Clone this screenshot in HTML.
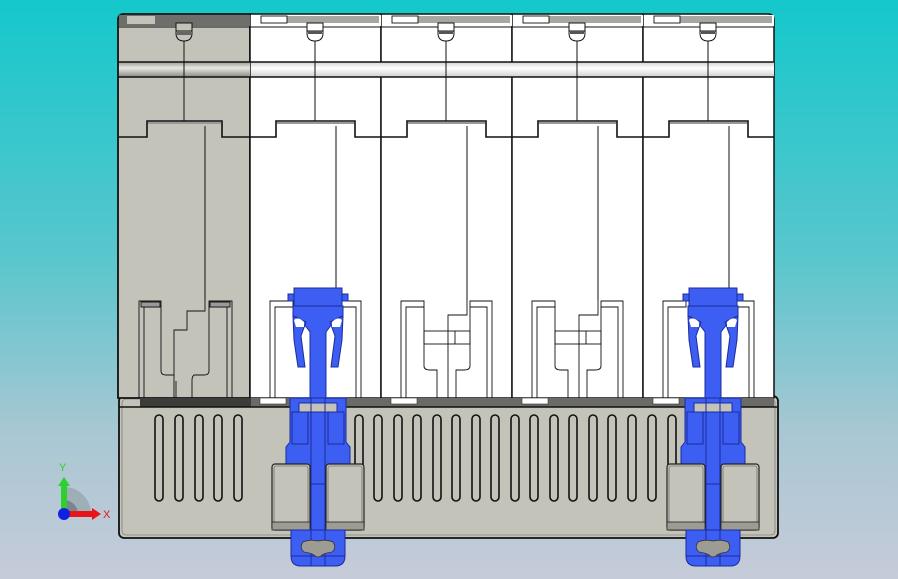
<!DOCTYPE html>
<html><head><meta charset="utf-8"><style>
html,body{margin:0;padding:0;width:898px;height:579px;overflow:hidden}
svg{display:block}
text{font-family:"Liberation Sans",sans-serif}
</style></head><body>
<svg width="898" height="579" viewBox="0 0 898 579" xmlns="http://www.w3.org/2000/svg">
<defs>
<linearGradient id="bg" x1="0" y1="0" x2="0" y2="1">
<stop offset="0" stop-color="#14c8cb"/>
<stop offset="0.45" stop-color="#5ac6cd"/>
<stop offset="0.75" stop-color="#a9c7d3"/>
<stop offset="1" stop-color="#c6cbd9"/>
</linearGradient>
<linearGradient id="rail" x1="0" y1="0" x2="0" y2="1">
<stop offset="0" stop-color="#9a9a94"/><stop offset="0.4" stop-color="#e8e8e2"/><stop offset="1" stop-color="#8a8a84"/>
</linearGradient>
<linearGradient id="railw" x1="0" y1="0" x2="0" y2="1">
<stop offset="0" stop-color="#cfcfcf"/><stop offset="0.4" stop-color="#ffffff"/><stop offset="1" stop-color="#cfcfcf"/>
</linearGradient>
<g id="slot"><rect x="-4" y="415" width="8" height="86" rx="4" fill="#c4c3ba" stroke="#111" stroke-width="1.6"/></g>
<g id="conn">
<rect x="-30" y="294" width="6" height="7" fill="#3d5ef2" stroke="#1c2c9c"/>
<rect x="24" y="294" width="6" height="7" fill="#3d5ef2" stroke="#1c2c9c"/>
<rect x="-24" y="288" width="48" height="18" fill="#3d5ef2" stroke="#1c2c9c"/>
<path d="M-25 306 H25 V316 Q18 318 14 324 L8 332 V398 H-8 V332 L-14 324 Q-18 318 -25 316 Z" fill="#3d5ef2" stroke="#1c2c9c"/>
<path d="M-25 316 L-24 340 L-20 367 L-13 367 L-17 336 L-12 322 Z" fill="#3d5ef2" stroke="#1c2c9c"/>
<path d="M25 316 L24 340 L20 367 L13 367 L17 336 L12 322 Z" fill="#3d5ef2" stroke="#1c2c9c"/>
<path d="M-24 320 Q-20 316 -14 322 L-14 327 L-22 327 Z" fill="#fff"/>
<path d="M24 320 Q20 316 14 322 L14 327 L22 327 Z" fill="#fff"/>
<path d="M-28 398 H28 V442 L32 447 V466 H8 V535 H-8 V466 H-32 V447 L-28 442 Z" fill="#3d5ef2" stroke="#1c2c9c"/>
<rect x="-19" y="403" width="38" height="9" fill="#c4c3ba" stroke="#1c2c9c"/>
<rect x="-26" y="412" width="16" height="32" fill="#3d5ef2" stroke="#1c2c9c"/>
<rect x="10" y="412" width="16" height="32" fill="#3d5ef2" stroke="#1c2c9c"/>
<line x1="-7" y1="398" x2="-7" y2="535" stroke="#1c2c9c"/>
<line x1="7" y1="398" x2="7" y2="535" stroke="#1c2c9c"/>
<line x1="-8" y1="484" x2="8" y2="484" stroke="#1c2c9c"/>
<rect x="-46" y="464" width="38" height="66" rx="3" fill="#c4c3ba" stroke="#222" stroke-width="1.2"/>
<rect x="-44" y="466" width="34" height="62" rx="2" fill="none" stroke="#555" stroke-width="0.6"/>
<rect x="-46" y="522" width="38" height="8" fill="#9c9b94" stroke="#222" stroke-width="0.8"/>
<rect x="8" y="464" width="38" height="66" rx="3" fill="#c4c3ba" stroke="#222" stroke-width="1.2"/>
<rect x="10" y="466" width="34" height="62" rx="2" fill="none" stroke="#555" stroke-width="0.6"/>
<rect x="8" y="522" width="38" height="8" fill="#9c9b94" stroke="#222" stroke-width="0.8"/>
<path d="M-27 530 H27 V556 Q27 566 17 566 H-17 Q-27 566 -27 556 Z" fill="#3d5ef2" stroke="#1c2c9c"/>
<line x1="-27" y1="556" x2="27" y2="556" stroke="#1c2c9c"/>
<line x1="-7" y1="530" x2="-7" y2="566" stroke="#1c2c9c"/>
<line x1="7" y1="530" x2="7" y2="566" stroke="#1c2c9c"/>
<path d="M-15 542 Q-19 548 -14 552 Q-7 553 -4 555 Q0 559 4 555 Q7 553 14 552 Q19 548 15 542 Q8 539 0 541 Q-8 539 -15 542 Z" fill="#9c9b94" stroke="#333" stroke-width="0.8"/>
</g>
</defs>
<rect width="898" height="579" fill="url(#bg)"/>

<rect x="119" y="396" width="659" height="142" rx="5" fill="#c4c3ba" stroke="#111" stroke-width="1.8"/>
<rect x="122" y="399" width="653" height="136" rx="4" fill="none" stroke="#666" stroke-width="0.6"/>

<path d="M118 398 V20 Q118 14 124 14 H250 V398 Z" fill="#c4c3ba" stroke="#111" stroke-width="1.8"/>
<rect x="250" y="14" width="131" height="384" fill="#fff" stroke="#111" stroke-width="1.5"/>
<rect x="381" y="14" width="131" height="384" fill="#fff" stroke="#111" stroke-width="1.5"/>
<rect x="512" y="14" width="131" height="384" fill="#fff" stroke="#111" stroke-width="1.5"/>
<path d="M643 14 H768 Q774 14 774 20 V398 H643 Z" fill="#fff" stroke="#111" stroke-width="1.5"/>

<rect x="119" y="15" width="131" height="11" fill="#6e6e6a"/>
<rect x="127" y="16" width="28" height="8" fill="#c4c3ba"/>
<g fill="#fff">
<rect x="251" y="15" width="130" height="11"/><rect x="382" y="15" width="130" height="11"/><rect x="513" y="15" width="130" height="11"/><rect x="644" y="15" width="130" height="11"/>
</g>
<g fill="#a6a6a2">
<rect x="287" y="16" width="92" height="7"/><rect x="418" y="16" width="92" height="7"/><rect x="549" y="16" width="92" height="7"/><rect x="680" y="16" width="92" height="7"/>
</g>
<g fill="none" stroke="#111" stroke-width="0.9">
<rect x="261" y="16" width="26" height="7"/><rect x="392" y="16" width="26" height="7"/><rect x="523" y="16" width="26" height="7"/><rect x="654" y="16" width="26" height="7"/>
</g>
<line x1="118" y1="27" x2="774" y2="27" stroke="#111" stroke-width="1"/>

<rect x="119" y="62" width="131" height="15" fill="url(#rail)"/>
<rect x="251" y="62" width="523" height="15" fill="url(#railw)"/>
<line x1="118" y1="62" x2="774" y2="62" stroke="#111" stroke-width="1.5"/>
<line x1="118" y1="77" x2="774" y2="77" stroke="#111" stroke-width="1.5"/>

<g fill="none" stroke="#111" stroke-width="1">
<path d="M176 23 H192 V33 Q192 41 184 41 Q176 41 176 33 Z" fill="#c4c3ba"/><line x1="176" y1="31" x2="192" y2="31"/><rect x="177" y="32" width="14" height="3" fill="#666" stroke="none"/>
<path d="M307 23 H323 V33 Q323 41 315 41 Q307 41 307 33 Z" fill="#fff"/><line x1="307" y1="31" x2="323" y2="31"/><rect x="308" y="31" width="14" height="3" fill="#555" stroke="none"/>
<path d="M438 23 H454 V33 Q454 41 446 41 Q438 41 438 33 Z" fill="#fff"/><line x1="438" y1="31" x2="454" y2="31"/><rect x="439" y="31" width="14" height="3" fill="#555" stroke="none"/>
<path d="M569 23 H585 V33 Q585 41 577 41 Q569 41 569 33 Z" fill="#fff"/><line x1="569" y1="31" x2="585" y2="31"/><rect x="570" y="31" width="14" height="3" fill="#555" stroke="none"/>
<path d="M700 23 H716 V33 Q716 41 708 41 Q700 41 700 33 Z" fill="#fff"/><line x1="700" y1="31" x2="716" y2="31"/><rect x="701" y="31" width="14" height="3" fill="#555" stroke="none"/>
<line x1="184" y1="41" x2="184" y2="121"/><line x1="315" y1="41" x2="315" y2="121"/><line x1="446" y1="41" x2="446" y2="121"/><line x1="577" y1="41" x2="577" y2="121"/><line x1="708" y1="41" x2="708" y2="121"/>
<g stroke-width="1.6">
<path d="M119 137 H147 V121 H222 V137 H250"/>
<path d="M250 137 H276 V121 H355 V137 H381"/>
<path d="M381 137 H407 V121 H486 V137 H512"/>
<path d="M512 137 H538 V121 H617 V137 H643"/>
<path d="M643 137 H669 V121 H748 V137 H774"/>
</g>
<g stroke="#999" stroke-width="2"><line x1="148" y1="123" x2="221" y2="123"/><line x1="277" y1="123" x2="354" y2="123"/><line x1="408" y1="123" x2="485" y2="123"/><line x1="539" y1="123" x2="616" y2="123"/><line x1="670" y1="123" x2="747" y2="123"/></g>
<line x1="205" y1="126" x2="205" y2="301"/><line x1="336" y1="126" x2="336" y2="300"/><line x1="467" y1="126" x2="467" y2="300"/><line x1="598" y1="126" x2="598" y2="300"/><line x1="729" y1="126" x2="729" y2="300"/>
</g>

<g fill="none" stroke="#111" stroke-width="0.9">
<path d="M139 398 V301 H161 V307 H144 V398"/><rect x="141" y="302" width="19" height="5" fill="#999"/>
<path d="M232 398 V301 H209 V307 H227 V398"/><rect x="210" y="302" width="20" height="5" fill="#999"/>
<path d="M161 307 V371 Q161 375 166 375 H174 V398"/>
<path d="M209 307 V371 Q209 375 204 375 H194 Q192 377 192 380 V398"/>
<path d="M205 301 V311 H187 V330 H174 V375"/>
<line x1="176" y1="381" x2="176" y2="398"/>
<path d="M401 398 V301 H424 V307 H406 V398"/><path d="M424 307 V366 Q424 370 430 370 H437 V398"/>
<path d="M492 398 V301 H470 V307 H487 V398"/><path d="M470 307 V366 Q470 370 464 370 H456 V398"/>
<path d="M467 300 V315 H448 V398"/><rect x="424" y="331" width="46" height="13"/><line x1="455" y1="331" x2="455" y2="344"/>
<path d="M532 398 V301 H555 V307 H537 V398"/><path d="M555 307 V366 Q555 370 561 370 H568 V398"/>
<path d="M623 398 V301 H601 V307 H618 V398"/><path d="M601 307 V366 Q601 370 595 370 H587 V398"/>
<path d="M598 300 V315 H579 V398"/><rect x="555" y="331" width="46" height="13"/><line x1="586" y1="331" x2="586" y2="344"/>
<path d="M270 398 V301 H293 V307 H275 V398"/><path d="M361 398 V301 H339 V307 H356 V398"/>
<path d="M663 398 V301 H686 V307 H668 V398"/><path d="M754 398 V301 H732 V307 H749 V398"/>
</g>

<rect x="140" y="398" width="111" height="9" fill="#3c3c3a"/>
<rect x="251" y="398" width="523" height="9" fill="#6a6a66"/>
<g fill="#fff" stroke="#333" stroke-width="0.6">
<rect x="260" y="398" width="26" height="6"/><rect x="391" y="398" width="26" height="6"/><rect x="522" y="398" width="26" height="6"/><rect x="653" y="398" width="26" height="6"/>
</g>
<line x1="119" y1="407" x2="777" y2="407" stroke="#111" stroke-width="1.4"/>

<use href="#slot" x="159"/><use href="#slot" x="179"/><use href="#slot" x="199"/><use href="#slot" x="218"/><use href="#slot" x="238"/>
<use href="#slot" x="359"/><use href="#slot" x="378"/><use href="#slot" x="398"/><use href="#slot" x="417"/><use href="#slot" x="437"/><use href="#slot" x="456"/><use href="#slot" x="476"/><use href="#slot" x="495"/><use href="#slot" x="515"/><use href="#slot" x="534"/><use href="#slot" x="554"/><use href="#slot" x="573"/><use href="#slot" x="593"/><use href="#slot" x="612"/><use href="#slot" x="632"/><use href="#slot" x="652"/><use href="#slot" x="672"/>

<use href="#conn" x="318"/>
<use href="#conn" x="713"/>

<path d="M64 514 V487 A27 27 0 0 1 91 514 Z" fill="#8e9ea2" opacity="0.6"/>
<path d="M64 514 V500 A14 14 0 0 1 78 514 Z" fill="#6a7478" opacity="0.7"/>
<rect x="61" y="484" width="6" height="28" fill="#2ed02e"/>
<path d="M58 486 L64 477 L70 486 Z" fill="#2ed02e"/>
<rect x="64" y="511" width="30" height="6" fill="#e8141a"/>
<path d="M92 508 L101 514 L92 520 Z" fill="#e8141a"/>
<circle cx="64" cy="514" r="6" fill="#1020e0"/>
<text x="59" y="471" font-size="11" fill="#2ed02e">Y</text>
<text x="103" y="518" font-size="11" fill="#e8141a">X</text>
</svg>
</body></html>
